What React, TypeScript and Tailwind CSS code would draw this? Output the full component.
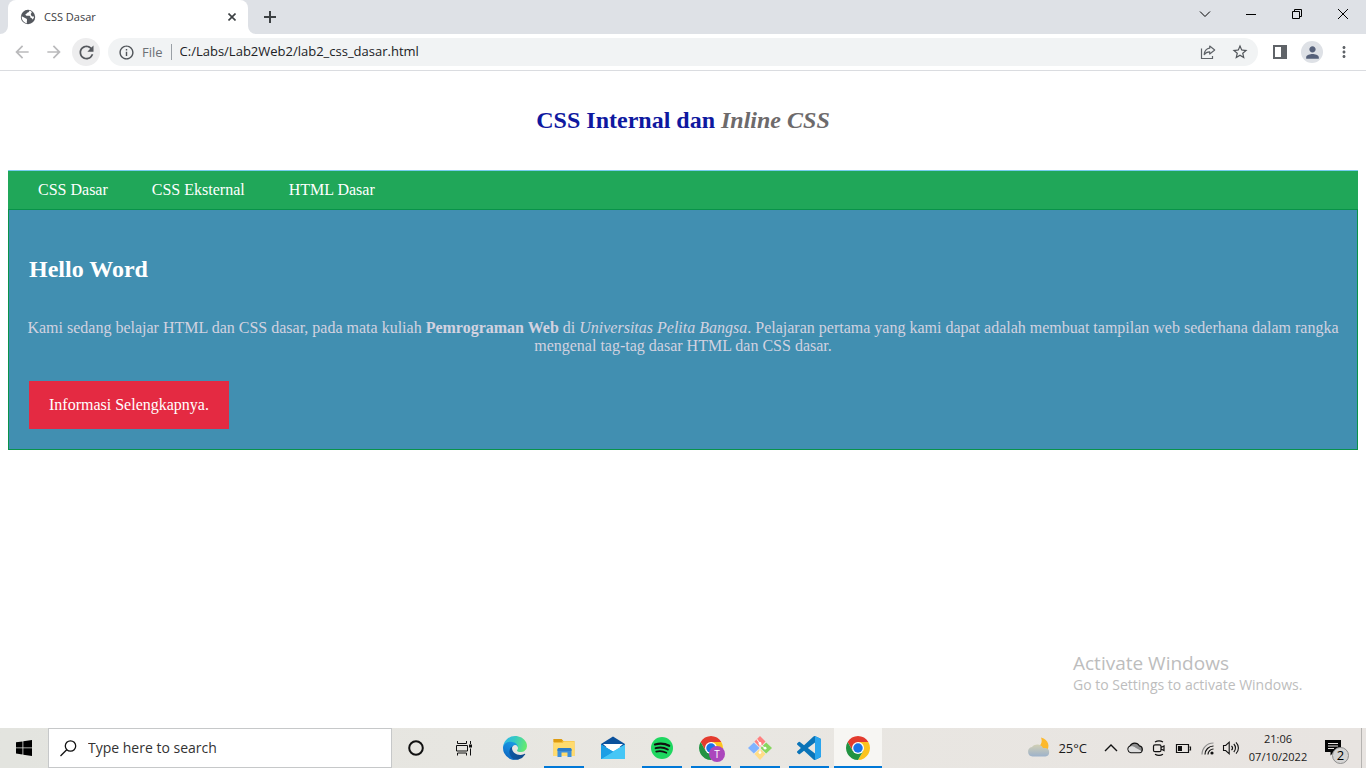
import type { ReactNode } from "react";
import {
  MdArrowBack,
  MdArrowForward,
  MdInfoOutline,
  MdMoreVert,
  MdPerson,
  MdRefresh,
  MdStarBorder,
} from "react-icons/md";

function CaptionButton({ label, children }: { label: string; children: ReactNode }) {
  return (
    <button type="button" aria-label={label} className="flex h-7 w-[46px] items-center justify-center text-black">
      <svg width="12" height="12" viewBox="0 0 12 12" fill="none" stroke="currentColor" shapeRendering="geometricPrecision">
        {children}
      </svg>
    </button>
  );
}

function TabStrip() {
  return (
    <div className="flex h-[34px] items-start bg-[#dee1e6]">
      <div className="flex h-full items-end">
        <svg width="8" height="8" viewBox="0 0 8 8" aria-hidden="true">
          <path d="M8 0v8H0a8 8 0 0 0 8-8z" fill="#fff" />
        </svg>
        <div className="flex h-full w-60 items-center rounded-t-lg bg-white pr-2 pl-3">
          <svg width="16" height="16" viewBox="0 0 16 16" aria-hidden="true">
            <circle cx="8" cy="8" r="7.200" fill="#54585e" />
            <path
              d="M9.500 1.600c-.2 1.300-1 2-2.300 2.200-.4.900-1 1.300-1.800 1.500.2 1 .9 1.500 2 1.500h2c.9.300 1.100 1.200 1 2 1 .1 1.900.7 2 1.800 1-1 1.700-2.200 1.700-3.200-1.400.3-2.500-.1-3-1.200-.5-.9-.3-1.700.6-2.100.1-1.200-.4-2.100-2.200-2.500z"
              fill="#fff"
            />
            <path d="M1.700 7.200l4.300 2.300c.9.400 1.100 1.100 1 2-.1.800-.3 1.500 0 2.700-3-.4-5.600-3.400-5.300-7z" fill="#fff" />
          </svg>
          <span className="ml-2 flex-1 text-[11px] text-[#3c4043]">CSS Dasar</span>
          <button type="button" aria-label="Close tab" className="flex h-4 w-4 items-center justify-center">
            <svg width="8" height="8" viewBox="0 0 8 8" stroke="#3c4043" strokeWidth="1.6">
              <path d="M0.5 0.5l7 7M7.5 0.5l-7 7" />
            </svg>
          </button>
        </div>
        <svg width="8" height="8" viewBox="0 0 8 8" aria-hidden="true">
          <path d="M0 0v8h8a8 8 0 0 1-8-8z" fill="#fff" />
        </svg>
      </div>
      <button type="button" aria-label="New tab" className="flex h-[34px] w-7 items-center justify-center">
        <svg width="12" height="12" viewBox="0 0 12 12" stroke="#3c4043" strokeWidth="2">
          <path d="M6 0v12M0 6h12" />
        </svg>
      </button>
      <div className="ml-auto flex">
        <CaptionButton label="Search tabs">
          <path d="M1 3.5l5 5 5-5" />
        </CaptionButton>
        <CaptionButton label="Minimize">
          <path d="M1 6.5h10" />
        </CaptionButton>
        <CaptionButton label="Restore">
          <path d="M1.5 3.5h7v7h-7zM3.5 3.5v-2h7v7h-2" />
        </CaptionButton>
        <CaptionButton label="Close">
          <path d="M1 1l10 10M11 1L1 11" />
        </CaptionButton>
      </div>
    </div>
  );
}

function ToolbarButton({ label, children }: { label: string; children: ReactNode }) {
  return (
    <button type="button" aria-label={label} className="flex h-7 w-8 items-center justify-center">
      {children}
    </button>
  );
}

function Toolbar() {
  return (
    <div className="flex items-center border-b border-[#dadce0] bg-white px-1.5 py-1">
      <ToolbarButton label="Back">
        <MdArrowBack size={20} color="#bababc" />
      </ToolbarButton>
      <ToolbarButton label="Forward">
        <MdArrowForward size={20} color="#bababc" />
      </ToolbarButton>
      <ToolbarButton label="Reload">
        <span className="flex h-7 w-7 items-center justify-center rounded-full bg-[#ededee]">
          <MdRefresh size={21} color="#55585d" />
        </span>
      </ToolbarButton>
      <div className="mx-1.5 flex h-7 flex-1 items-center rounded-full bg-[#f1f3f4] pl-2.5">
        <MdInfoOutline size={17} color="#505459" aria-hidden="true" />
        <label htmlFor="address" className="ml-[7px] border-r border-[#9aa0a6] pr-2 text-[13px] leading-4 text-[#6c7075]">
          File
        </label>
        <input
          id="address"
          type="text"
          defaultValue="C:/Labs/Lab2Web2/lab2_css_dasar.html"
          className="ml-2 min-w-0 flex-1 bg-transparent text-[13px] text-[#202124] outline-none"
        />
        <ToolbarButton label="Share this page">
          <svg width="16" height="16" viewBox="0 0 16 16" fill="none" stroke="#5f6368" strokeWidth="1.2">
            <path d="M1.500 4.500v10h11v-2.500" />
            <path d="M9.700 2l5 4-5 4V7.800C7.200 7.700 5.500 8.700 4.200 10.600c.3-3.400 2.200-5.900 5.500-6.400z" strokeLinejoin="round" />
          </svg>
        </ToolbarButton>
        <ToolbarButton label="Bookmark this tab">
          <MdStarBorder size={18} color="#505459" />
        </ToolbarButton>
        <span className="w-0.5" />
      </div>
      <ToolbarButton label="Side panel">
        <svg width="14" height="14" viewBox="0 0 14 14">
          <path d="M0 0h14v14H0zM2 2v10h6V2z" fill="#5f6368" fillRule="evenodd" />
        </svg>
      </ToolbarButton>
      <ToolbarButton label="Profile">
        <span className="flex h-[22px] w-[22px] items-center justify-center rounded-full bg-[#dee1e6]">
          <MdPerson size={19} color="#56617a" />
        </span>
      </ToolbarButton>
      <ToolbarButton label="Menu">
        <MdMoreVert size={18} color="#5f6368" />
      </ToolbarButton>
    </div>
  );
}

function Page() {
  return (
    <main className="relative flex-1 bg-white px-2 font-['Liberation_Serif','Times_New_Roman',serif] text-base leading-[18px]">
      <header className="border-b border-[#77ccef] px-2.5 py-9">
        <h1 className="text-center text-2xl leading-[27px] font-bold text-[#0f189f]">
          CSS Internal dan <i className="text-[#6d6a6b]">Inline CSS</i>
        </h1>
      </header>
      <nav className="flex gap-11 bg-[#20a759] py-2.5 pl-[30px] text-white">
        <a href="#dasar">CSS Dasar</a>
        <a href="#eksternal">CSS Eksternal</a>
        <a href="#html">HTML Dasar</a>
      </nav>
      <section className="border border-[#099249] bg-[#418fb1] p-2.5 text-[#d2d2e0]">
        <h2 className="px-2.5 py-9 text-2xl leading-[27px] font-bold text-white">Hello Word</h2>
        <p className="text-center">
          Kami sedang belajar HTML dan CSS dasar, pada mata kuliah <b>Pemrograman Web</b> di{" "}
          <i>Universitas Pelita Bangsa</i>. Pelajaran pertama yang kami dapat adalah membuat tampilan web sederhana
          dalam rangka mengenal tag-tag dasar HTML dan CSS dasar.
        </p>
        <a href="#info" className="mx-2.5 mt-[26px] mb-2.5 inline-block bg-[#e42a42] px-5 py-[15px] align-top text-white">
          Informasi Selengkapnya.
        </a>
      </section>
      <aside className="absolute right-[57px] bottom-[33px] w-[236px] font-['Open_Sans','Noto_Sans',sans-serif] text-[#bdbdbd]">
        <p className="text-[19px] leading-6">Activate Windows</p>
        <p className="text-sm leading-5">Go to Settings to activate Windows.</p>
      </aside>
    </main>
  );
}

function ChromeLogo() {
  return (
    <svg width="24" height="24" viewBox="0 0 48 48">
      <circle cx="24" cy="24" r="24" fill="#fff" />
      <path d="M24 12h20.780A24 24 0 0 0 3.220 12l10.390 18L24 24z" fill="#e33b2e" />
      <path d="M34.390 30L24 48A24 24 0 0 0 44.780 12H24z" fill="#fcc31e" />
      <path d="M13.610 30L3.220 12A24 24 0 0 0 24 48l10.390-18z" fill="#229342" />
      <circle cx="24" cy="24" r="12" fill="#fff" />
      <circle cx="24" cy="24" r="9.500" fill="#1a73e8" />
    </svg>
  );
}

function EdgeLogo() {
  return (
    <svg width="24" height="24" viewBox="0 0 256 256">
      <defs>
        <linearGradient id="edge-base" x1="0" y1="0.500" x2="1" y2="0.500">
          <stop offset="0" stopColor="#0c59a4" />
          <stop offset="1" stopColor="#114a8b" />
        </linearGradient>
        <linearGradient id="edge-left" x1="0.700" y1="0" x2="0.200" y2="1">
          <stop offset="0" stopColor="#1b9de2" />
          <stop offset="0.500" stopColor="#1483d8" />
          <stop offset="1" stopColor="#0a5fb8" />
        </linearGradient>
        <linearGradient id="edge-top" x1="0" y1="0.300" x2="1" y2="0.500">
          <stop offset="0" stopColor="#2bb5e8" />
          <stop offset="0.450" stopColor="#35c9c4" />
          <stop offset="1" stopColor="#66eb6e" />
        </linearGradient>
      </defs>
      <path
        d="M231 190.500c-3.400 1.800-6.900 3.400-10.500 4.700a101.900 101.900 0 0 1-35.900 6.500c-47.300 0-88.500-32.500-88.500-74.300a31.500 31.500 0 0 1 16.400-27.300c-42.800 1.800-53.800 46.400-53.800 72.500 0 73.900 68.100 81.400 82.800 81.400 7.900 0 19.800-2.300 27-4.600l1.300-.4a128.300 128.300 0 0 0 66.600-52.800 4 4 0 0 0-5.400-5.700z"
        fill="url(#edge-base)"
      />
      <path
        d="M105.700 241.400A79.200 79.200 0 0 1 83 220.100a80.700 80.700 0 0 1 29.500-120c3.200-1.500 8.500-4.100 15.600-4a32.400 32.400 0 0 1 25.700 13 31.900 31.900 0 0 1 6.300 18.700c0-.2 24.500-79.600-80-79.600-43.900 0-80 41.700-80 78.200a130.200 130.200 0 0 0 12.100 56 128 128 0 0 0 156.400 67.100 75.500 75.500 0 0 1-62.800-8z"
        fill="url(#edge-left)"
      />
      <path
        d="M152.300 148.900c-.9 1-3.400 2.500-3.400 5.600 0 2.600 1.700 5.200 4.800 7.300 14.300 10 41.400 8.600 41.500 8.600a59.600 59.600 0 0 0 30.300-8.300 61.400 61.400 0 0 0 30.400-52.900c.3-22.400-8-37.300-11.300-43.900C223.500 23.900 177.700 0 128 0A128 128 0 0 0 0 126.200c.500-36.500 36.800-66 80-66 3.500 0 23.500.3 42 10.100 16.300 8.600 24.900 18.900 30.800 29.200 6.200 10.700 7.300 24.100 7.300 29.500 0 5.300-2.700 13.300-7.800 19.900z"
        fill="url(#edge-top)"
      />
    </svg>
  );
}

function ExplorerLogo() {
  return (
    <svg width="22" height="22" viewBox="0 0 22 22">
      <path d="M.5 2h8l2 2h11v15H.5z" fill="#f5bd3b" />
      <path d="M.5 2h8l1.500 1.800L8.500 5h-8z" fill="#dd9b11" />
      <path d="M.5 6h9l1.500-1.500h10.500V19H.5z" fill="#ffdb6e" />
      <path d="M4.500 20v-7.500a1.500 1.500 0 0 1 1.500-1.500h11a1.500 1.500 0 0 1 1.500 1.500V20h-4v-4.500h-6V20z" fill="#3b8fdc" />
      <path d="M4.500 14v-1.500A1.500 1.500 0 0 1 6 11h11a1.500 1.500 0 0 1 1.500 1.500V14z" fill="#2d7cc7" />
    </svg>
  );
}

function MailLogo() {
  return (
    <svg width="24" height="24" viewBox="0 0 24 24">
      <path d="M0 8l12-7.500L24 8v3H0z" fill="#0b519c" />
      <path d="M2 8h20L12 17z" fill="#fff" />
      <path d="M0 8.500L12 15.500 24 8.500V23H0z" fill="#35b8f1" />
      <path d="M0 8.500v14.500L24 23z" fill="#1795df" />
      <path d="M24 8.500L0 23h24z" fill="#45c6f6" />
      <path d="M0 8.500L12 15.700 0 23z" fill="#1c9fe5" />
    </svg>
  );
}

function SpotifyLogo() {
  return (
    <svg width="24" height="24" viewBox="0 0 24 24" fill="none" stroke="#101010" strokeLinecap="round">
      <circle cx="12" cy="12" r="11" fill="#1ed760" stroke="none" />
      <path d="M5 8.500c5-1.500 10-1 14.200 1.300" strokeWidth="2.200" />
      <path d="M5.600 12.200c4.200-1.200 8.500-.8 12.200 1.300" strokeWidth="1.900" />
      <path d="M6.200 15.600c3.700-.9 7-.5 10.200 1.200" strokeWidth="1.600" />
    </svg>
  );
}

function GitLogo() {
  return (
    <svg width="24" height="24" viewBox="0 0 26 26">
      <path d="M13 0l6 6-6 6.500L7 6z" fill="#ff8080" />
      <path d="M6.300 7L12.500 13l-6.200 6L0 13z" fill="#80b3ff" />
      <path d="M19.700 7L26 13l-6.300 6-6.200-6z" fill="#87d75f" />
      <path d="M13 13.500l6 6L13 26l-6-6.500z" fill="#ffdd87" />
      <path d="M9.500 3.500l3.500 4.500v9M13 8.500l5.500 5" fill="none" stroke="#f7f3ee" strokeWidth="1.200" />
      <circle cx="13" cy="8" r="1.500" fill="#fff" />
      <circle cx="13" cy="18" r="1.500" fill="#fff" />
      <circle cx="18.500" cy="13.200" r="1.500" fill="#fff" />
    </svg>
  );
}

function CodeLogo() {
  return (
    <svg width="24" height="24" viewBox="0 0 24 24">
      <path
        d="M23.150 2.587L18.210.210a1.494 1.494 0 0 0-1.705.290l-9.460 8.630-4.120-3.128a.999.999 0 0 0-1.276.057L.327 7.261A1 1 0 0 0 .326 8.740L3.899 12 .326 15.260a1 1 0 0 0 .001 1.479L1.650 17.940a.999.999 0 0 0 1.276.057l4.120-3.128 9.460 8.630a1.492 1.492 0 0 0 1.704.290l4.942-2.377A1.500 1.500 0 0 0 24 20.060V3.939a1.500 1.500 0 0 0-.850-1.352zm-5.146 14.861L10.826 12l7.178-5.448v10.896z"
        fill="#0a74b8"
      />
      <path d="M18 .100l5.150 2.487A1.500 1.500 0 0 1 24 3.940v16.120a1.500 1.500 0 0 1-.850 1.350L18 23.900z" fill="#2aa5ee" />
    </svg>
  );
}

function TaskApp({ label, state, children }: { label: string; state: "idle" | "open" | "active"; children: ReactNode }) {
  return (
    <button
      type="button"
      aria-label={label}
      className={
        state === "active"
          ? "mr-px flex h-10 w-12 flex-col items-center bg-[#f7f6f3]"
          : "mr-px flex h-10 w-12 flex-col items-center"
      }
    >
      <span className="flex flex-1 items-center pt-0.5">{children}</span>
      {state === "open" && <span className="h-0.5 w-10 bg-[#0078d7]" />}
      {state === "active" && <span className="h-0.5 w-full bg-[#0078d7]" />}
      {state === "idle" && <span className="h-0.5" />}
    </button>
  );
}

function TrayButton({ label, children }: { label: string; children: ReactNode }) {
  return (
    <button type="button" aria-label={label} className="flex h-10 w-6 items-center justify-center">
      <svg width="18" height="18" viewBox="0 0 18 18" fill="none" stroke="#111" strokeWidth="1.200">
        {children}
      </svg>
    </button>
  );
}

function Tray() {
  return (
    <div className="ml-auto flex items-center">
      <button type="button" className="mr-3 flex h-10 items-center gap-[7px] text-sm text-[#1b1b1b]">
        <svg width="24" height="24" viewBox="0 0 24 24" aria-hidden="true">
          <defs>
            <linearGradient id="cloud" x1="0" y1="0" x2="0" y2="1">
              <stop offset="0" stopColor="#d2d0b4" />
              <stop offset="1" stopColor="#9db2cb" />
            </linearGradient>
          </defs>
          <path d="M14 1.500c2 5-.5 9-5 10.500l4 4h6c4.500-5 3-12.500-5-14.500z" fill="#fdb92c" />
          <path d="M5.500 20.500a4.800 4.800 0 0 1-.5-9.500 6.500 6.500 0 0 1 11 1h2.500a4.300 4.300 0 0 1 0 8.500z" fill="url(#cloud)" />
        </svg>
        <span className="text-[13px]">25°C</span>
      </button>
      <TrayButton label="Show hidden icons">
        <path d="M3 12l6-6 6 6" strokeWidth="1.400" />
      </TrayButton>
      <TrayButton label="OneDrive">
        <path
          d="M4.800 13.700a3.500 3.500 0 0 1-.8-6.600 5.200 5.200 0 0 1 9.300-.3 3.500 3.500 0 0 1 .2 6.900z"
          fill="#8c8c8c"
        />
        <path d="M4.800 13.200a2.900 2.900 0 0 1-.5-5.600c2-.6 3.800 0 5.200 1.200l6 3.200c-.5.800-1.100 1.200-2 1.200z" fill="#dedede" stroke="none" />
      </TrayButton>
      <TrayButton label="Camera">
        <path
          d="M5 3c2.500-1.500 5.500-1.500 8 0M5 15.200c2.500 1.500 5.500 1.500 8 0M5 5.800h4.500a1.500 1.500 0 0 1 1.500 1.500v3.900a1.500 1.500 0 0 1-1.500 1.500H5a1.500 1.500 0 0 1-1.500-1.500V7.300A1.500 1.500 0 0 1 5 5.800zM11 8.500l3-1.500v4.500L11 10"
          strokeWidth="1.200"
        />
      </TrayButton>
      <TrayButton label="Battery">
        <path d="M2.500 5.500h12v8h-12zM15.500 8h1v3h-1" />
        <path d="M4 7h4v5H4z" fill="#111" stroke="none" />
      </TrayButton>
      <TrayButton label="Network">
        <path d="M4 15.500C4 9 9 4 15.500 4" stroke="#8d8d8d" />
        <path d="M7 15.500C7 10.800 10.800 7 15.500 7M10 15.500c0-3 2.500-5.500 5.500-5.500" />
        <circle cx="14" cy="14" r="1.600" fill="#111" stroke="none" />
      </TrayButton>
      <TrayButton label="Volume">
        <path d="M1.500 6.500h2.200l3.500-3.300v11.600l-3.500-3.300H1.500zM9.500 6.800c1.200 1.200 1.200 3.200 0 4.400M11.800 5c2.200 2.200 2.200 5.800 0 8M14 3.300c3.200 3.200 3.200 8.200 0 11.400" strokeWidth="1.100" />
      </TrayButton>
      <button type="button" className="flex h-10 w-[70px] flex-col items-center justify-center text-[11px] leading-[18px] text-[#1b1b1b]">
        <span>21:06</span>
        <span>07/10/2022</span>
      </button>
      <button type="button" aria-label="Notifications" className="flex h-10 w-12 items-center justify-center">
        <span className="relative flex h-6 w-6">
          <svg width="17" height="18" viewBox="0 0 17 18" className="mt-1">
            <path d="M0 0h16v12H9l-3.500 3.500V12H0z" fill="#050505" />
            <path d="M3 3.500h10M3 6h10M3 8.500h6" stroke="#e9e5e2" />
          </svg>
          <span className="absolute right-0 -bottom-1 flex h-[17px] w-[17px] items-center justify-center rounded-full border border-[#8d8d8d] bg-[#d5d4d3] text-[13px] leading-none text-black">
            2
          </span>
        </span>
      </button>
      <span className="h-10 w-[5px] border-l border-[#b5b3b1]" />
    </div>
  );
}

function Taskbar() {
  return (
    <footer className="flex h-10 bg-linear-to-r from-[#e3e4df] via-[#e9e7e2] to-[#e8e4e1]">
      <button type="button" aria-label="Start" className="flex h-10 w-12 items-center justify-center">
        <svg width="16" height="16" viewBox="0 0 16 16">
          <path d="M0 2.300L6.500 1.400v6.100H0zM7.300 1.300L16 0v7.500H7.300zM0 8.300h6.500v6.100L0 13.500zM7.300 8.300H16V16l-8.700-1.300z" />
        </svg>
      </button>
      <label className="flex h-10 w-[344px] items-center border border-[#c6c8c9] bg-white pl-[11px]">
        <svg width="17" height="17" viewBox="0 0 17 17" fill="none" stroke="#111" strokeWidth="1.300" aria-label="Search">
          <circle cx="10.500" cy="6" r="5.200" />
          <path d="M6.700 9.800L.5 16" />
        </svg>
        <input
          type="text"
          aria-label="Search"
          placeholder="Type here to search"
          className="ml-[11px] min-w-0 flex-1 bg-transparent text-sm text-[#333] outline-none placeholder:text-[#333]"
        />
      </label>
      <button type="button" aria-label="Cortana" className="flex h-10 w-12 items-center justify-center">
        <svg width="16" height="16" viewBox="0 0 16 16" fill="none" stroke="#111" strokeWidth="2">
          <circle cx="8" cy="8" r="6.800" />
        </svg>
      </button>
      <button type="button" aria-label="Task view" className="mr-[3px] flex h-10 w-12 items-center justify-center">
        <svg width="16" height="16" viewBox="0 0 16 16" fill="none" stroke="#111">
          <path d="M1.500 1v2.500h9V1M1.500 15.500V13h9v2.500M.5 5.500h11v5.500H.5zM14.500 1v3M14.500 8.500v7" />
          <path d="M13 4.500h3v3h-3z" fill="#111" stroke="none" />
        </svg>
      </button>
      <TaskApp label="Microsoft Edge" state="idle">
        <EdgeLogo />
      </TaskApp>
      <TaskApp label="File Explorer" state="open">
        <ExplorerLogo />
      </TaskApp>
      <TaskApp label="Mail" state="idle">
        <MailLogo />
      </TaskApp>
      <TaskApp label="Spotify" state="open">
        <SpotifyLogo />
      </TaskApp>
      <TaskApp label="Google Chrome, profile T" state="open">
        <span className="relative">
          <ChromeLogo />
          <span className="absolute -right-0.5 -bottom-0.5 flex h-4 w-4 items-center justify-center rounded-full bg-[#ab47bc] text-[10px] leading-none text-white">
            T
          </span>
        </span>
      </TaskApp>
      <TaskApp label="Git Bash" state="open">
        <GitLogo />
      </TaskApp>
      <TaskApp label="Visual Studio Code" state="open">
        <CodeLogo />
      </TaskApp>
      <TaskApp label="Google Chrome" state="active">
        <ChromeLogo />
      </TaskApp>
      <Tray />
    </footer>
  );
}

export default function App() {
  return (
    <div className="flex min-h-screen flex-col bg-white font-['Open_Sans','Noto_Sans',sans-serif]">
      <TabStrip />
      <Toolbar />
      <Page />
      <Taskbar />
    </div>
  );
}
